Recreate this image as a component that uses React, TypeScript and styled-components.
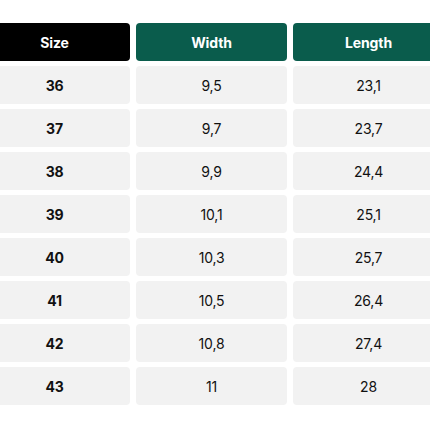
import React from "react";
import styled, { createGlobalStyle } from "styled-components";

const Global = createGlobalStyle`
  html, body { margin: 0; padding: 0; background: #ffffff; overflow: hidden; }
  body { font-family: "Inter", "Lato", sans-serif; }
`;

const Page = styled.div`
  width: 430px;
  height: 430px;
  overflow: hidden;
  padding-top: 23px;
  box-sizing: border-box;
`;

const Table = styled.div`
  margin-left: -21px;
  width: 465px;
  display: grid;
  grid-template-columns: repeat(3, 151px);
  column-gap: 6px;
  row-gap: 5px;
`;

const HeadCell = styled.div<{ $dark?: boolean }>`
  height: 38px;
  border-radius: 4px;
  background: ${(p) => (p.$dark ? "#000000" : "#0a5c4c")};
  color: #ffffff;
  display: flex;
  align-items: center;
  justify-content: center;
  font-weight: 700;
  font-size: 14px;
  letter-spacing: -0.1px;
`;

const Cell = styled.div<{ $bold?: boolean }>`
  height: 38px;
  border-radius: 4px;
  background: #f2f2f2;
  color: #111111;
  display: flex;
  align-items: center;
  justify-content: center;
  font-weight: ${(p) => (p.$bold ? 700 : 400)};
  font-size: 14px;
  letter-spacing: -0.2px;
`;

const rows: [string, string, string][] = [
  ["36", "9,5", "23,1"],
  ["37", "9,7", "23,7"],
  ["38", "9,9", "24,4"],
  ["39", "10,1", "25,1"],
  ["40", "10,3", "25,7"],
  ["41", "10,5", "26,4"],
  ["42", "10,8", "27,4"],
  ["43", "11", "28"],
];

export default function App() {
  return (
    <Page>
      <Global />
      <Table>
        <HeadCell $dark>Size</HeadCell>
        <HeadCell>Width</HeadCell>
        <HeadCell>Length</HeadCell>
        {rows.map((r) => (
          <React.Fragment key={r[0]}>
            <Cell $bold>{r[0]}</Cell>
            <Cell>{r[1]}</Cell>
            <Cell>{r[2]}</Cell>
          </React.Fragment>
        ))}
      </Table>
    </Page>
  );
}
